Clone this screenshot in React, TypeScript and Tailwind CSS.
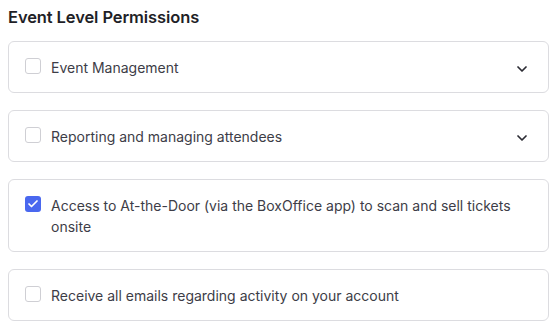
import React from 'react'
import { ChevronDown, Check } from 'lucide-react';

type Perm = {
    label: React.ReactNode;
    checked: boolean;
    expandable: boolean;
};

const perms: Perm[] = [
    { label: 'Event Management', checked: false, expandable: true },
    { label: 'Reporting and managing attendees', checked: false, expandable: true },
    {
        label: 'Access to At-the-Door (via the BoxOffice app) to scan and sell tickets onsite',
        checked: true,
        expandable: false,
    },
    { label: 'Receive all emails regarding activity on your account', checked: false, expandable: false },
];

export default function App() {
    return (
        <div className="w-[560px] h-[333px] bg-white px-2 pt-[5px] font-['Inter',sans-serif]">
            <h2 className="text-[16.5px] leading-[24px] font-semibold text-[#1f1f27] tracking-[-0.1px]">
                Event Level Permissions
            </h2>
            <div className="mt-[12px] w-[541px] flex flex-col gap-[17px]">
                {perms.map((p, i) => (
                    <div
                        key={i}
                        className="flex items-start border border-[#dcdce0] rounded-[6px] pl-4 pr-[18px] py-[14.5px]"
                    >
                        <span
                            className={
                                p.checked
                                    ? "shrink-0 mt-[1px] w-4 h-4 rounded-[3px] bg-[#4a68ef] flex items-center justify-center"
                                    : "shrink-0 mt-[1px] w-4 h-4 rounded-[3px] border border-[#cfcfd4] bg-white"
                            }
                        >
                            {p.checked && <Check className="w-3 h-3 text-white" strokeWidth={3.5} />}
                        </span>
                        <span className="ml-[10px] flex-1 pr-[14px] text-[14px] leading-[21px] text-[#3d3d47]">
                            {p.label}
                        </span>
                        {p.expandable && (
                            <ChevronDown className="shrink-0 w-4 h-4 text-[#2b2b33] mt-[4px]" strokeWidth={2.6} />
                        )}
                    </div>
                ))}
            </div>
        </div>
    );
}
